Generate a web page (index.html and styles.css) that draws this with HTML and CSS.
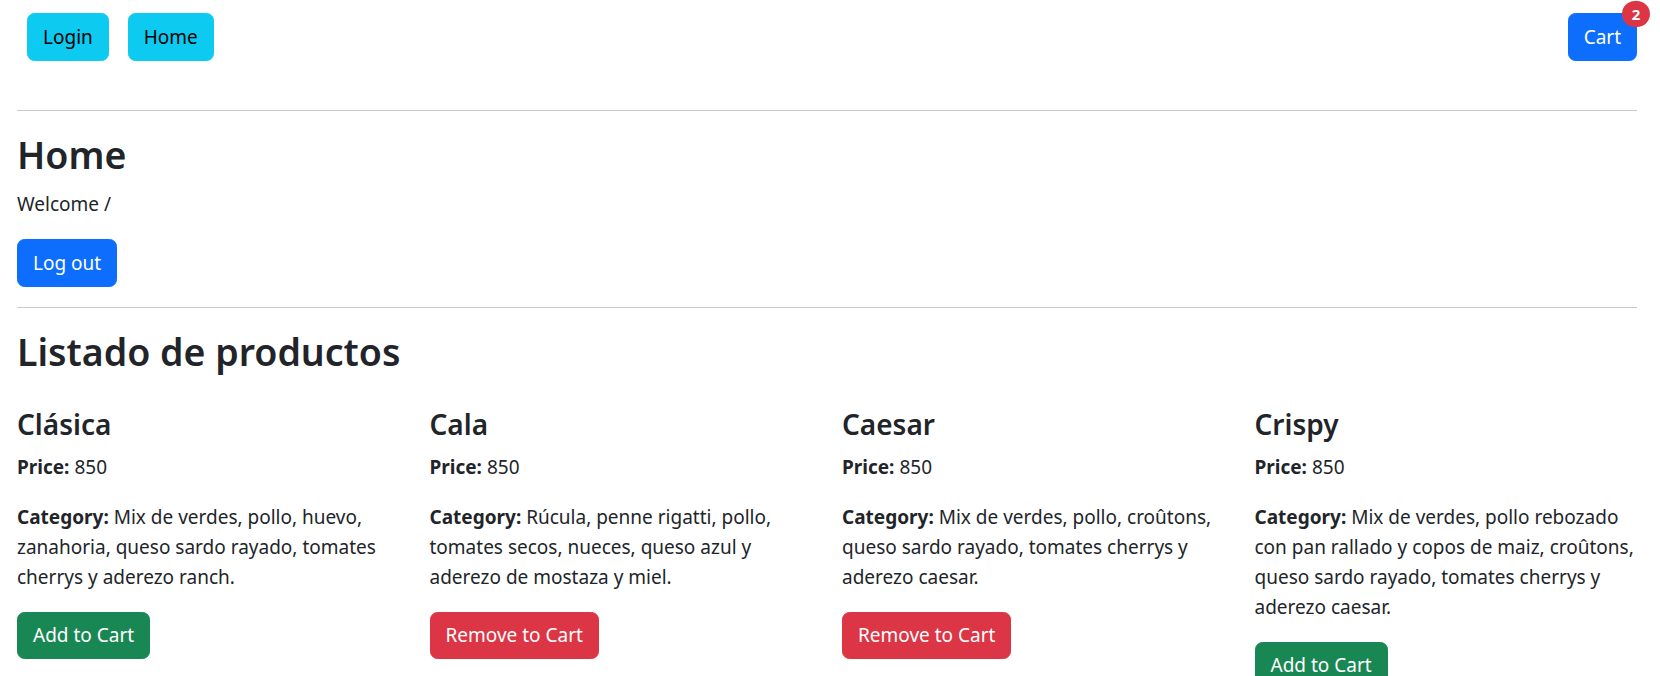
FILE: index.html
```html
<!DOCTYPE html>
<html lang="es">
<head>
<meta charset="utf-8">
<title>Home</title>
<link rel="stylesheet" href="styles.css">
</head>
<body>
<div class="page">
  <nav class="topbar">
    <div class="nav-left">
      <button class="btn btn-info nav-btn">Login</button>
      <button class="btn btn-info nav-btn">Home</button>
    </div>
    <button class="btn btn-primary cart">Cart<span class="badge">2</span></button>
  </nav>
  <hr class="rule">
  <h1 class="title">Home</h1>
  <p class="text">Welcome /</p>
  <button class="btn btn-primary">Log out</button>
  <hr class="rule">
  <h1 class="title list-title">Listado de productos</h1>
  <div class="products">
    <div class="product">
      <h4 class="product-name">Clásica</h4>
      <p class="text"><strong>Price:</strong> 850</p>
      <p class="text"><strong>Category:</strong> Mix de verdes, pollo, huevo, zanahoria, queso sardo rayado, tomates cherrys y aderezo ranch.</p>
      <button class="btn btn-success">Add to Cart</button>
    </div>
    <div class="product">
      <h4 class="product-name">Cala</h4>
      <p class="text"><strong>Price:</strong> 850</p>
      <p class="text"><strong>Category:</strong> Rúcula, penne rigatti, pollo, tomates secos, nueces, queso azul y aderezo de mostaza y miel.</p>
      <button class="btn btn-danger">Remove to Cart</button>
    </div>
    <div class="product">
      <h4 class="product-name">Caesar</h4>
      <p class="text"><strong>Price:</strong> 850</p>
      <p class="text"><strong>Category:</strong> Mix de verdes, pollo, croûtons, queso sardo rayado, tomates cherrys y aderezo caesar.</p>
      <button class="btn btn-danger">Remove to Cart</button>
    </div>
    <div class="product">
      <h4 class="product-name">Crispy</h4>
      <p class="text"><strong>Price:</strong> 850</p>
      <p class="text"><strong>Category:</strong> Mix de verdes, pollo rebozado con pan rallado y copos de maiz, croûtons, queso sardo rayado, tomates cherrys y aderezo caesar.</p>
      <button class="btn btn-success">Add to Cart</button>
    </div>
  </div>
</div>
</body>
</html>
```

FILE: styles.css
```css
* { box-sizing: border-box; }

html, body {
  margin: 0;
  padding: 0;
  background: #fff;
}

body {
  font-family: "Noto Sans", "Open Sans", sans-serif;
  font-size: 19px;
  line-height: 30px;
  color: #212529;
}

.page {
  padding: 0 23px 0 17px;
}

.topbar {
  display: flex;
  justify-content: space-between;
  align-items: flex-start;
  padding: 13px 0 29.5px;
}

.nav-left {
  display: flex;
  gap: 19px;
  padding-left: 10px;
}

.btn {
  display: inline-block;
  font-family: inherit;
  font-size: 19px;
  line-height: 30px;
  font-weight: 400;
  padding: 7.75px 15px;
  border: 1px solid transparent;
  border-radius: 7.5px;
  cursor: pointer;
  color: #fff;
  margin: 0;
}

.btn-info {
  background: #0dcaf0;
  border-color: #0dcaf0;
  color: #000;
}

.btn-primary {
  background: #0d6efd;
  border-color: #0d6efd;
}

.btn-success {
  background: #198754;
  border-color: #198754;
}

.btn-danger {
  background: #dc3545;
  border-color: #dc3545;
}

.cart {
  position: relative;
}

.badge {
  position: absolute;
  top: 0;
  left: 100%;
  transform: translate(-50%, -50%);
  background: #dc3545;
  color: #fff;
  font-size: 15px;
  font-weight: 700;
  line-height: 1;
  padding: 5.5px 9.75px;
  border-radius: 999px;
}

.rule {
  margin: 20px 0;
  border: 0;
  border-top: 1px solid #c8c9ca;
}

.title {
  margin: 0 0 10px;
  font-size: 37.5px;
  line-height: 48px;
  font-weight: 600;
}

.list-title {
  margin-bottom: 30px;
}

.text {
  margin: 0 0 20px;
}

.text strong {
  font-weight: 700;
}

.products {
  display: grid;
  grid-template-columns: repeat(4, 1fr);
  column-gap: 30px;
}

.product-name {
  margin: 0 0 10px;
  font-size: 28px;
  line-height: 36px;
  font-weight: 600;
}
```
